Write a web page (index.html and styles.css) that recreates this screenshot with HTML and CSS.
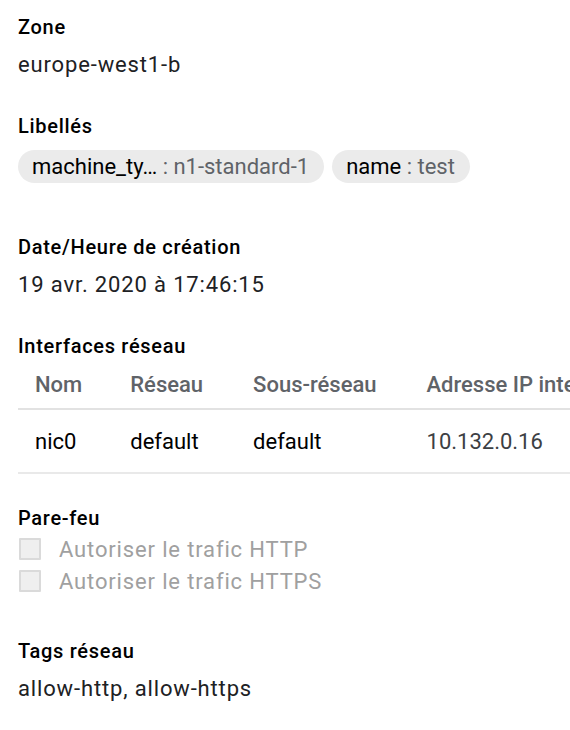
FILE: index.html
```html
<!DOCTYPE html>
<html lang="fr">
<head>
<meta charset="utf-8">
<title>Détails de l'instance</title>
<link rel="stylesheet" href="styles.css">
</head>
<body>
<main class="details">
  <section class="field">
    <div class="label">Zone</div>
    <div class="value">europe-west1-b</div>
  </section>

  <section class="field field-chips">
    <div class="label">Libellés</div>
    <div class="chips">
      <span class="chip"><span class="chip-key">machine_ty…</span><span class="chip-val"> : n1-standard-1</span></span>
      <span class="chip"><span class="chip-key">name</span><span class="chip-val"> : test</span></span>
    </div>
  </section>

  <section class="field">
    <div class="label">Date/Heure de création</div>
    <div class="value">19 avr. 2020 à 17:46:15</div>
  </section>

  <section class="field field-table">
    <div class="label">Interfaces réseau</div>
    <div class="table-wrap">
      <table class="net">
        <thead>
          <tr><th class="col-first">Nom</th><th>Réseau</th><th>Sous-réseau</th><th>Adresse IP interne</th></tr>
        </thead>
        <tbody>
          <tr><td class="col-first">nic0</td><td>default</td><td>default</td><td class="muted">10.132.0.16</td></tr>
        </tbody>
      </table>
    </div>
  </section>

  <section class="field field-checks">
    <div class="label">Pare-feu</div>
    <div class="checks">
      <label class="check"><span class="box"></span>Autoriser le trafic HTTP</label>
      <label class="check"><span class="box"></span>Autoriser le trafic HTTPS</label>
    </div>
  </section>

  <section class="field">
    <div class="label">Tags réseau</div>
    <div class="value">allow-http, allow-https</div>
  </section>
</main>
</body>
</html>
```

FILE: styles.css
```css
html, body {
  margin: 0;
  padding: 0;
  background: #ffffff;
  overflow: hidden;
}
body {
  font-family: Roboto, "Liberation Sans", Arial, sans-serif;
  color: #202124;
  width: 570px;
  height: 730px;
}
.details {
  padding: 15px 0 0 18px;
  display: flex;
  flex-direction: column;
  gap: 35px;
}
.field {
  display: flex;
  flex-direction: column;
}
.field-chips { padding-bottom: 17px; }
.field-table { margin-bottom: -3px; }
.field-checks { padding-bottom: 7px; }
.label {
  font-size: 20px;
  font-weight: 500;
  line-height: 24px;
  letter-spacing: 0.7px;
  color: #000000;
}
.value {
  font-size: 22px;
  line-height: 28px;
  letter-spacing: 0.85px;
  margin-top: 12px;
  color: #202124;
}
.chips {
  display: flex;
  gap: 8px;
  margin-top: 12px;
}
.chip {
  background: #ebebeb;
  border-radius: 17px;
  height: 33px;
  line-height: 33px;
  padding: 0 15px 0 14px;
  font-size: 22px;
  white-space: nowrap;
}
.chip-key { color: #000000; }
.chip-val { color: #5f6368; }
.table-wrap {
  margin-top: 2px;
  overflow: hidden;
  width: 552px;
}
.net {
  border-collapse: collapse;
  white-space: nowrap;
}
.net th, .net td {
  text-align: left;
  padding: 0 33px 0 17px;
  font-size: 22px;
  vertical-align: middle;
}
.net .col-first { padding-right: 31px; }
.net th {
  font-weight: 500;
  color: #5f6368;
  height: 48px;
  border-bottom: 2px solid #e2e2e2;
}
.net td {
  height: 62px;
  color: #000000;
  border-bottom: 2px solid #e9e9e9;
}
.net td.muted { color: #3c4043; }
.checks {
  display: flex;
  flex-direction: column;
  margin-top: 3px;
}
.check {
  display: flex;
  align-items: center;
  gap: 18px;
  height: 32px;
  font-size: 22px;
  letter-spacing: 0.85px;
  color: #a0a0a0;
  padding-left: 1px;
}
.box {
  box-sizing: border-box;
  width: 22px;
  height: 22px;
  border: 2px solid #dadada;
  background: #efefef;
  border-radius: 1px;
}
```
